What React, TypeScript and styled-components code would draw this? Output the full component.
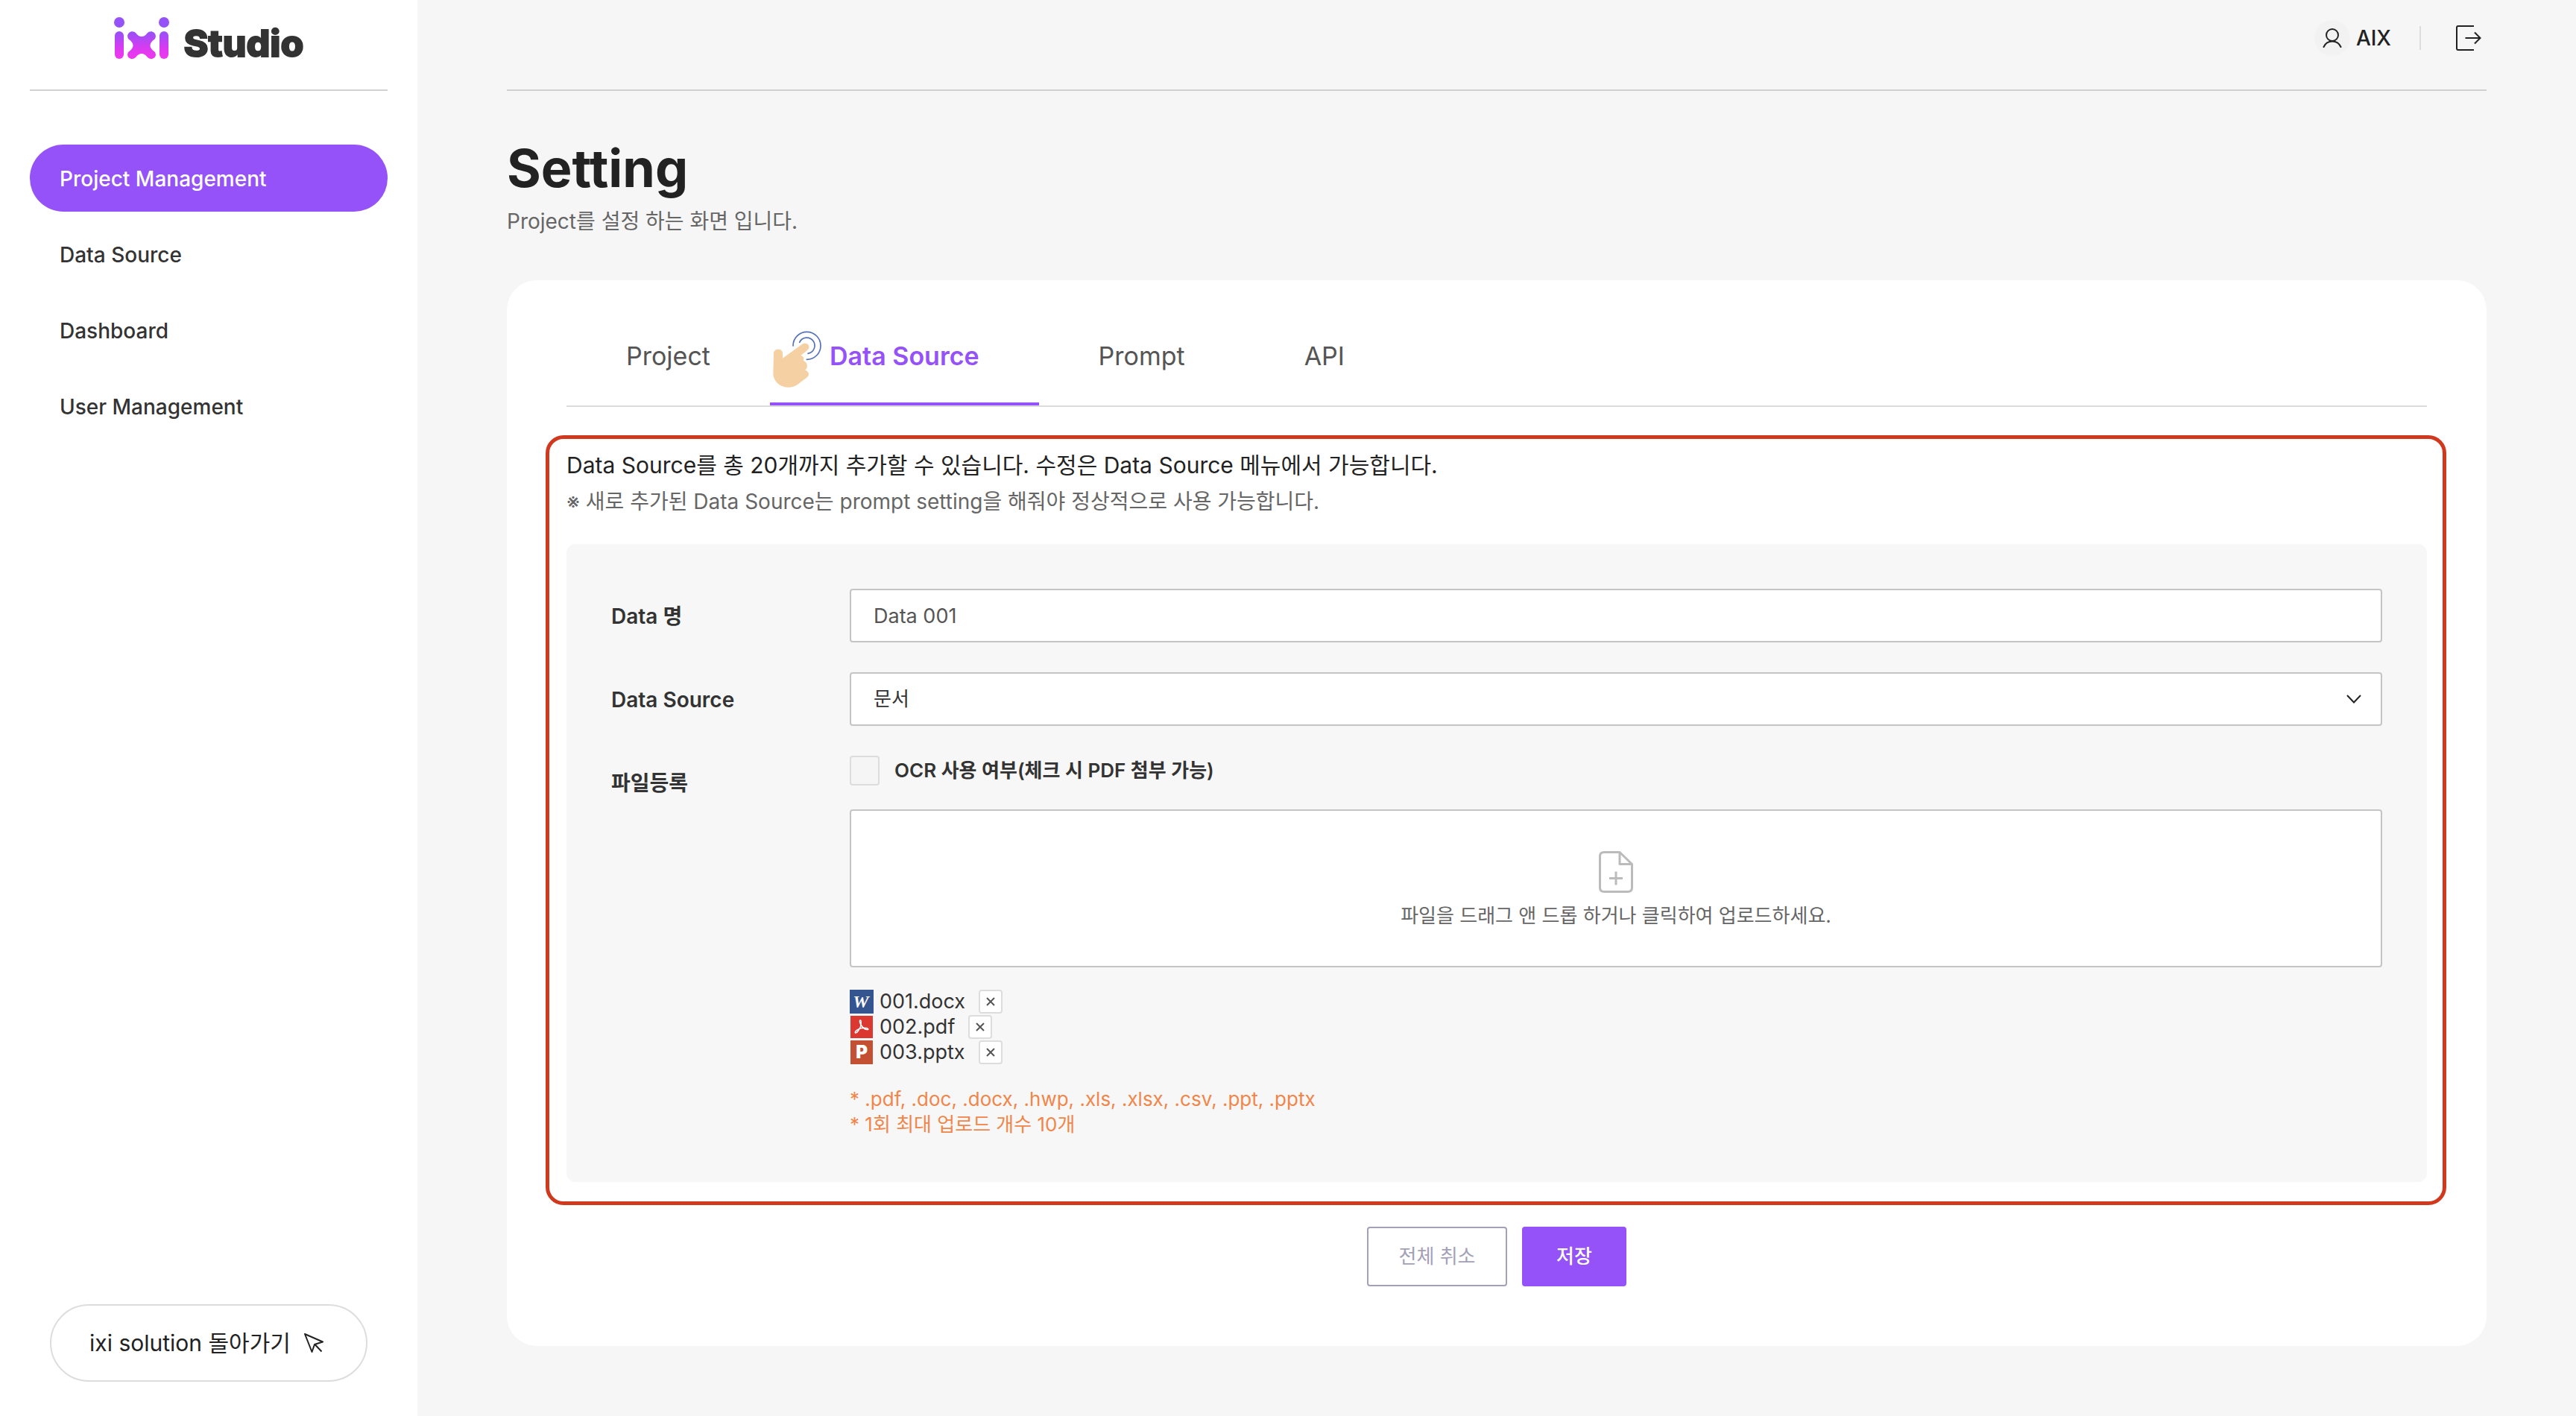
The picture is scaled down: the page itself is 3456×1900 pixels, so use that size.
import React, { useState } from "react";
import styled, { createGlobalStyle } from "styled-components";

const color = {
  purple: "#9452f8",
  page: "#f6f6f6",
  panel: "#f7f7f7",
  ink: "#222222",
  text: "#333333",
  sub: "#666666",
  line: "#d1d1d1",
  lineSoft: "#dddddd",
  field: "#c4c4c4",
  muted: "#a3a1b7",
  hint: "#f0864a",
  guide: "#d1391f",
};

const GlobalStyle = createGlobalStyle`
  *, *::before, *::after { box-sizing: border-box; }
  body {
    margin: 0;
    background: ${color.page};
    color: ${color.text};
    font-family: Inter, "Noto Sans CJK KR", sans-serif;
    font-size: 28px;
    line-height: 34px;
  }
  h1, p, ul { margin: 0; padding: 0; }
  ul { list-style: none; }
  button, input, select { font: inherit; color: inherit; }
  button { cursor: pointer; }
  svg { display: block; flex: none; }
`;

const Page = styled.div`
  display: flex;
  min-height: 100vh;
`;

const Sidebar = styled.aside`
  display: flex;
  flex-direction: column;
  flex: none;
  width: 560px;
  padding: 0 40px 46px;
  background: #ffffff;
`;

const Logo = styled.a`
  display: flex;
  justify-content: center;
  align-items: flex-start;
  gap: 20px;
  height: 122px;
  padding-top: 22px;
  border-bottom: 2px solid ${color.line};
  text-decoration: none;
`;

const LogoName = styled.span`
  padding-top: 4px;
  color: ${color.text};
  font-size: 50px;
  font-weight: 800;
  line-height: 64px;
  -webkit-text-stroke: 2px ${color.text};
  stroke-linejoin: round;
`;

const Nav = styled.nav`
  display: flex;
  flex-direction: column;
  gap: 12px;
  margin-top: 72px;
`;

const NavLink = styled.a<{ $active?: boolean }>`
  display: flex;
  align-items: center;
  height: 90px;
  padding: 2px 40px 0;
  border-radius: 45px;
  background: ${(p) => (p.$active ? color.purple : "transparent")};
  color: ${(p) => (p.$active ? "#ffffff" : color.text)};
  font-weight: 500;
  text-decoration: none;
`;

const BackLink = styled.a`
  display: flex;
  align-items: center;
  align-self: center;
  gap: 18px;
  height: 104px;
  margin-top: auto;
  padding: 0 57px 0 51px;
  border: 2px solid ${color.lineSoft};
  border-radius: 52px;
  color: ${color.ink};
  font-size: 30px;
  font-weight: 400;
  text-decoration: none;
`;

const Main = styled.main`
  flex: 1;
  min-width: 0;
  padding: 0 120px 94px;
`;

const TopBar = styled.header`
  display: flex;
  justify-content: flex-end;
  align-items: flex-start;
  height: 122px;
  padding-top: 27px;
  border-bottom: 2px solid ${color.line};
`;

const User = styled.div`
  display: flex;
  align-items: center;
  gap: 8px;
  height: 48px;
  color: ${color.ink};
  font-weight: 500;
`;

const Avatar = styled.span`
  display: grid;
  place-items: center;
  width: 48px;
  height: 48px;
  border-radius: 50%;
  background: #f2f2f2;
`;

const Divider = styled.span`
  width: 2px;
  height: 32px;
  margin: 8px 40px 0 38px;
  background: ${color.lineSoft};
`;

const IconButton = styled.button`
  display: grid;
  place-items: center;
  width: 48px;
  height: 48px;
  padding: 0;
  border: 0;
  background: none;
`;

const Heading = styled.div`
  display: flex;
  flex-direction: column;
  gap: 10px;
  padding: 60px 0 62px;
`;

const Title = styled.h1`
  color: ${color.ink};
  font-size: 70px;
  font-weight: 700;
  line-height: 88px;
`;

const Subtitle = styled.p`
  color: ${color.sub};
  font-size: 28px;
  line-height: 34px;
`;

const Card = styled.section`
  padding: 40px 80px 80px;
  border-radius: 40px;
  background: #ffffff;
`;

const Tabs = styled.div`
  display: flex;
  border-bottom: 2px solid ${color.lineSoft};
`;

const Tab = styled.button<{ $active?: boolean }>`
  position: relative;
  height: 128px;
  padding: 0 80px;
  border: 0;
  border-bottom: 4px solid ${(p) => (p.$active ? color.purple : "transparent")};
  background: none;
  color: ${(p) => (p.$active ? color.purple : "#555555")};
  font-size: 34px;
  font-weight: ${(p) => (p.$active ? 600 : 400)};
`;

const Pointer = styled.svg`
  position: absolute;
  top: 27px;
  left: 2px;
`;

const Guided = styled.div`
  position: relative;
  margin-top: 58px;
`;

const GuideOutline = styled.div`
  position: absolute;
  inset: -20px -26px -31px -28px;
  border: 5px solid ${color.guide};
  border-radius: 24px;
  pointer-events: none;
`;

const Intro = styled.div`
  display: flex;
  flex-direction: column;
  gap: 12px;
  margin-bottom: 40px;
`;

const Lead = styled.p`
  color: ${color.ink};
  font-size: 30px;
  font-weight: 400;
  line-height: 40px;
`;

const Note = styled.p`
  color: ${color.sub};
  font-size: 28px;
  line-height: 34px;
`;

const Panel = styled.div`
  display: grid;
  grid-template-columns: 320px minmax(0, 1fr);
  row-gap: 40px;
  padding: 60px;
  border-radius: 12px;
  background: ${color.panel};
`;

const Label = styled.label`
  display: flex;
  align-items: center;
  height: 72px;
  padding-top: 2px;
  font-weight: 600;
`;

const TextField = styled.input`
  width: 100%;
  height: 72px;
  padding: 0 30px;
  border: 2px solid ${color.field};
  border-radius: 4px;
  background: #ffffff;
  color: #555555;
  font-size: 27px;
`;

const SelectBox = styled.div`
  display: grid;
  align-items: center;

  & > * { grid-area: 1 / 1; }
  & > svg {
    justify-self: end;
    margin-right: 27px;
    pointer-events: none;
  }
`;

const Select = styled.select`
  width: 100%;
  height: 72px;
  padding: 0 80px 0 30px;
  border: 2px solid ${color.field};
  border-radius: 4px;
  background: #ffffff;
  font-size: 26px;
  appearance: none;
`;

const CheckRow = styled.label`
  display: flex;
  align-items: center;
  gap: 20px;
  height: 40px;
  margin-bottom: 32px;
  font-size: 26px;
  font-weight: 600;
`;

const CheckBox = styled.input`
  width: 40px;
  height: 40px;
  margin: 0;
  border: 2px solid ${color.lineSoft};
  border-radius: 4px;
  background: #f5f5f5;
  appearance: none;

  &:checked { background: ${color.purple}; }
`;

const DropZone = styled.button`
  display: flex;
  flex-direction: column;
  align-items: center;
  justify-content: center;
  gap: 14px;
  width: 100%;
  height: 212px;
  padding: 4px 0 0;
  border: 2px solid ${color.field};
  border-radius: 4px;
  background: #ffffff;
  color: ${color.sub};
  font-size: 26px;
  line-height: 34px;
`;

const FileList = styled.ul`
  margin: 29px 0;
`;

const FileRow = styled.li`
  display: flex;
  align-items: center;
  height: 34px;
  font-size: 27px;
`;

const FileName = styled.span`
  margin: 0 18px 0 8px;
`;

const RemoveButton = styled.button`
  display: grid;
  place-items: center;
  width: 32px;
  height: 32px;
  padding: 0;
  border: 2px solid ${color.lineSoft};
  border-radius: 4px;
  background: #ffffff;
`;

const Hint = styled.p`
  color: ${color.hint};
  font-size: 26px;
  line-height: 34px;
`;

const Actions = styled.div`
  display: flex;
  justify-content: center;
  gap: 20px;
  margin-top: 60px;
`;

const Action = styled.button<{ $primary?: boolean }>`
  width: ${(p) => (p.$primary ? 140 : 188)}px;
  height: 80px;
  padding: 0;
  border: 2px solid ${(p) => (p.$primary ? color.purple : color.muted)};
  border-radius: 4px;
  background: ${(p) => (p.$primary ? color.purple : "#ffffff")};
  color: ${(p) => (p.$primary ? "#ffffff" : color.muted)};
  font-size: 26px;
  font-weight: ${(p) => (p.$primary ? 500 : 400)};
`;

const LogoMark = () => (
  <svg width="74" height="58" viewBox="0 0 74 58" aria-hidden="true">
    <defs>
      <linearGradient id="mark" gradientUnits="userSpaceOnUse" x1="0" y1="20" x2="0" y2="56">
        <stop offset="0" stopColor="#9452f8" />
        <stop offset="0.65" stopColor="#dc3af0" />
        <stop offset="1" stopColor="#ee38f0" />
      </linearGradient>
    </defs>
    <g fill="url(#mark)">
      <circle cx="7" cy="8" r="7" />
      <rect x="1" y="20" width="12" height="37" rx="6" />
      <circle cx="67" cy="8" r="7" />
      <rect x="61" y="20" width="12" height="37" rx="6" />
      <path d="M29.500 22.500C33.500 28.500 40.500 28.500 44.500 22.500C50 16.500 59.500 23.500 54.500 30.500C46.500 36 46.500 42 54.500 47.500C59.500 54.500 50 60.500 44.500 54.500C40.500 48.500 33.500 48.500 29.500 54.500C24 60.500 14.500 54.500 19.500 47.500C27.500 42 27.500 36 19.500 30.500C14.500 23.500 24 16.500 29.500 22.500Z" />
    </g>
  </svg>
);

const UserIcon = () => (
  <svg width="26" height="26" viewBox="0 0 26 26" fill="none" stroke={color.ink} strokeWidth="2" strokeLinecap="round" aria-hidden="true">
    <circle cx="13" cy="9" r="8" />
    <path d="M1.500 25C3.500 20.500 8 17.500 13 17.500S22.500 20.500 24.500 25" />
  </svg>
);

const LogoutIcon = () => (
  <svg width="34" height="34" viewBox="0 0 34 34" fill="none" stroke={color.ink} strokeWidth="2" aria-hidden="true">
    <path d="M24 1H3Q1 1 1 3V31Q1 33 3 33H24" />
    <path d="M12.500 17H32.500M25 9.500L32.500 17L25 24.500" />
  </svg>
);

const CursorIcon = () => (
  <svg width="26" height="26" viewBox="0 0 26 26" fill="none" stroke={color.ink} strokeWidth="2" strokeLinejoin="round" aria-hidden="true">
    <path d="M1 1L25 11.500L14 15L10.500 25ZM14.500 15L23.500 24.500" />
  </svg>
);

const TapIcon = () => (
  <Pointer width="68" height="78" viewBox="105 40 204 234" fill="none" aria-hidden="true">
    <path
      fill="#f5d0a2"
      d="M114 134C114 112 150 112 150 134V153L228 97C248 84 268 106 248 122L222 143C232 143 238 152 233 161C238 167 252 172 248 190C246 196 243 199 240 200C248 203 258 212 254 222C252 229 234 240 215 255C203 265 190 270 172 270C138 270 112 246 112 212Z"
    />
    <g stroke="#5470b8" strokeWidth="5" strokeLinecap="round">
      <path d="M192 103A55.500 55.500 0 1 1 247 158" />
      <path d="M218 89A32 32 0 1 1 252 134" />
    </g>
  </Pointer>
);

const ChevronIcon = () => (
  <svg width="22" height="14" viewBox="0 0 22 14" fill="none" stroke={color.ink} strokeWidth="2" aria-hidden="true">
    <path d="M2 2L11 11.500L20 2" />
  </svg>
);

const AddFileIcon = () => (
  <svg width="46" height="56" viewBox="0 0 46 56" fill="none" stroke="#bbbbbb" strokeWidth="3" strokeLinejoin="round" aria-hidden="true">
    <path d="M28 1.500H7Q1.500 1.500 1.500 7V49Q1.500 54.500 7 54.500H39Q44.500 54.500 44.500 49V17.500ZM28 1.500V17.500H44.500" />
    <path d="M23 27.500V45.500M14 36.500H32" />
  </svg>
);

const RemoveIcon = () => (
  <svg width="12" height="12" viewBox="0 0 12 12" stroke="#555555" strokeWidth="2" aria-hidden="true">
    <path d="M1 1L11 11M11 1L1 11" />
  </svg>
);

const WordIcon = () => (
  <svg width="32" height="32" viewBox="0 0 32 32" aria-hidden="true">
    <rect width="32" height="32" fill="#345590" />
    <text x="15" y="24" textAnchor="middle" fill="#ffffff" fontFamily="Liberation Serif, serif" fontSize="24" fontWeight="700" fontStyle="italic">W</text>
  </svg>
);

const PdfIcon = () => (
  <svg width="32" height="32" viewBox="0 0 32 32" aria-hidden="true">
    <rect x="1" y="1" width="30" height="30" fill="#db3832" />
    <path
      fill="none"
      stroke="#ffffff"
      strokeWidth="1.5"
      strokeLinejoin="round"
      d="M14.500 7C12.500 6.500 13.500 11 16 14.500C18 17.500 21 20 24.500 19.500C26 18 21 16.500 15.500 17.500C10 19 6.500 22 7.500 24C9.500 25 13 19 14.500 15.500C15.500 11 16 7.500 14.500 7Z"
    />
  </svg>
);

const PptIcon = () => (
  <svg width="32" height="32" viewBox="0 0 32 32" aria-hidden="true">
    <rect x="1" width="30" height="32" fill="#c35033" />
    <text x="16" y="24" textAnchor="middle" fill="#ffffff" fontFamily="Inter, sans-serif" fontSize="24" fontWeight="900">P</text>
  </svg>
);

const menu = ["Project Management", "Data Source", "Dashboard", "User Management"];
const tabs = ["Project", "Data Source", "Prompt", "API"];
const initialFiles = [
  { name: "001.docx", Icon: WordIcon },
  { name: "002.pdf", Icon: PdfIcon },
  { name: "003.pptx", Icon: PptIcon },
];

export default function App() {
  const [files, setFiles] = useState(initialFiles);
  const [tab, setTab] = useState("Data Source");

  return (
    <Page>
      <GlobalStyle />
      <Sidebar>
        <Logo href="#" aria-label="ixi Studio">
          <LogoMark />
          <LogoName>Studio</LogoName>
        </Logo>
        <Nav>
          {menu.map((item, i) => (
            <NavLink key={item} href="#" $active={i === 0}>
              {item}
            </NavLink>
          ))}
        </Nav>
        <BackLink href="#">
          ixi solution 돌아가기
          <CursorIcon />
        </BackLink>
      </Sidebar>

      <Main>
        <TopBar>
          <User>
            <Avatar>
              <UserIcon />
            </Avatar>
            AIX
          </User>
          <Divider />
          <IconButton type="button" aria-label="Logout">
            <LogoutIcon />
          </IconButton>
        </TopBar>

        <Heading>
          <Title>Setting</Title>
          <Subtitle>Project를 설정 하는 화면 입니다.</Subtitle>
        </Heading>

        <Card>
          <Tabs role="tablist">
            {tabs.map((name) => (
              <Tab key={name} type="button" role="tab" aria-selected={tab === name} $active={tab === name} onClick={() => setTab(name)}>
                {name}
                {name === "Data Source" && <TapIcon />}
              </Tab>
            ))}
          </Tabs>

          <Guided>
            <Intro>
              <Lead>Data Source를 총 20개까지 추가할 수 있습니다. 수정은 Data Source 메뉴에서 가능합니다.</Lead>
              <Note>※ 새로 추가된 Data Source는 prompt setting을 해줘야 정상적으로 사용 가능합니다.</Note>
            </Intro>

            <Panel>
              <Label htmlFor="data-name">Data 명</Label>
              <TextField id="data-name" defaultValue="Data 001" />

              <Label htmlFor="data-source">Data Source</Label>
              <SelectBox>
                <Select id="data-source" defaultValue="문서">
                  <option>문서</option>
                </Select>
                <ChevronIcon />
              </SelectBox>

              <Label htmlFor="drop-zone">파일등록</Label>
              <div>
                <CheckRow>
                  <CheckBox type="checkbox" />
                  OCR 사용 여부(체크 시 PDF 첨부 가능)
                </CheckRow>
                <DropZone id="drop-zone" type="button">
                  <AddFileIcon />
                  파일을 드래그 앤 드롭 하거나 클릭하여 업로드하세요.
                </DropZone>
                <FileList>
                  {files.map(({ name, Icon }) => (
                    <FileRow key={name}>
                      <Icon />
                      <FileName>{name}</FileName>
                      <RemoveButton type="button" aria-label={`${name} 삭제`} onClick={() => setFiles(files.filter((f) => f.name !== name))}>
                        <RemoveIcon />
                      </RemoveButton>
                    </FileRow>
                  ))}
                </FileList>
                <Hint>* .pdf, .doc, .docx, .hwp, .xls, .xlsx, .csv, .ppt, .pptx</Hint>
                <Hint>* 1회 최대 업로드 개수 10개</Hint>
              </div>
            </Panel>
            <GuideOutline />
          </Guided>

          <Actions>
            <Action type="button">전체 취소</Action>
            <Action type="button" $primary>
              저장
            </Action>
          </Actions>
        </Card>
      </Main>
    </Page>
  );
}
